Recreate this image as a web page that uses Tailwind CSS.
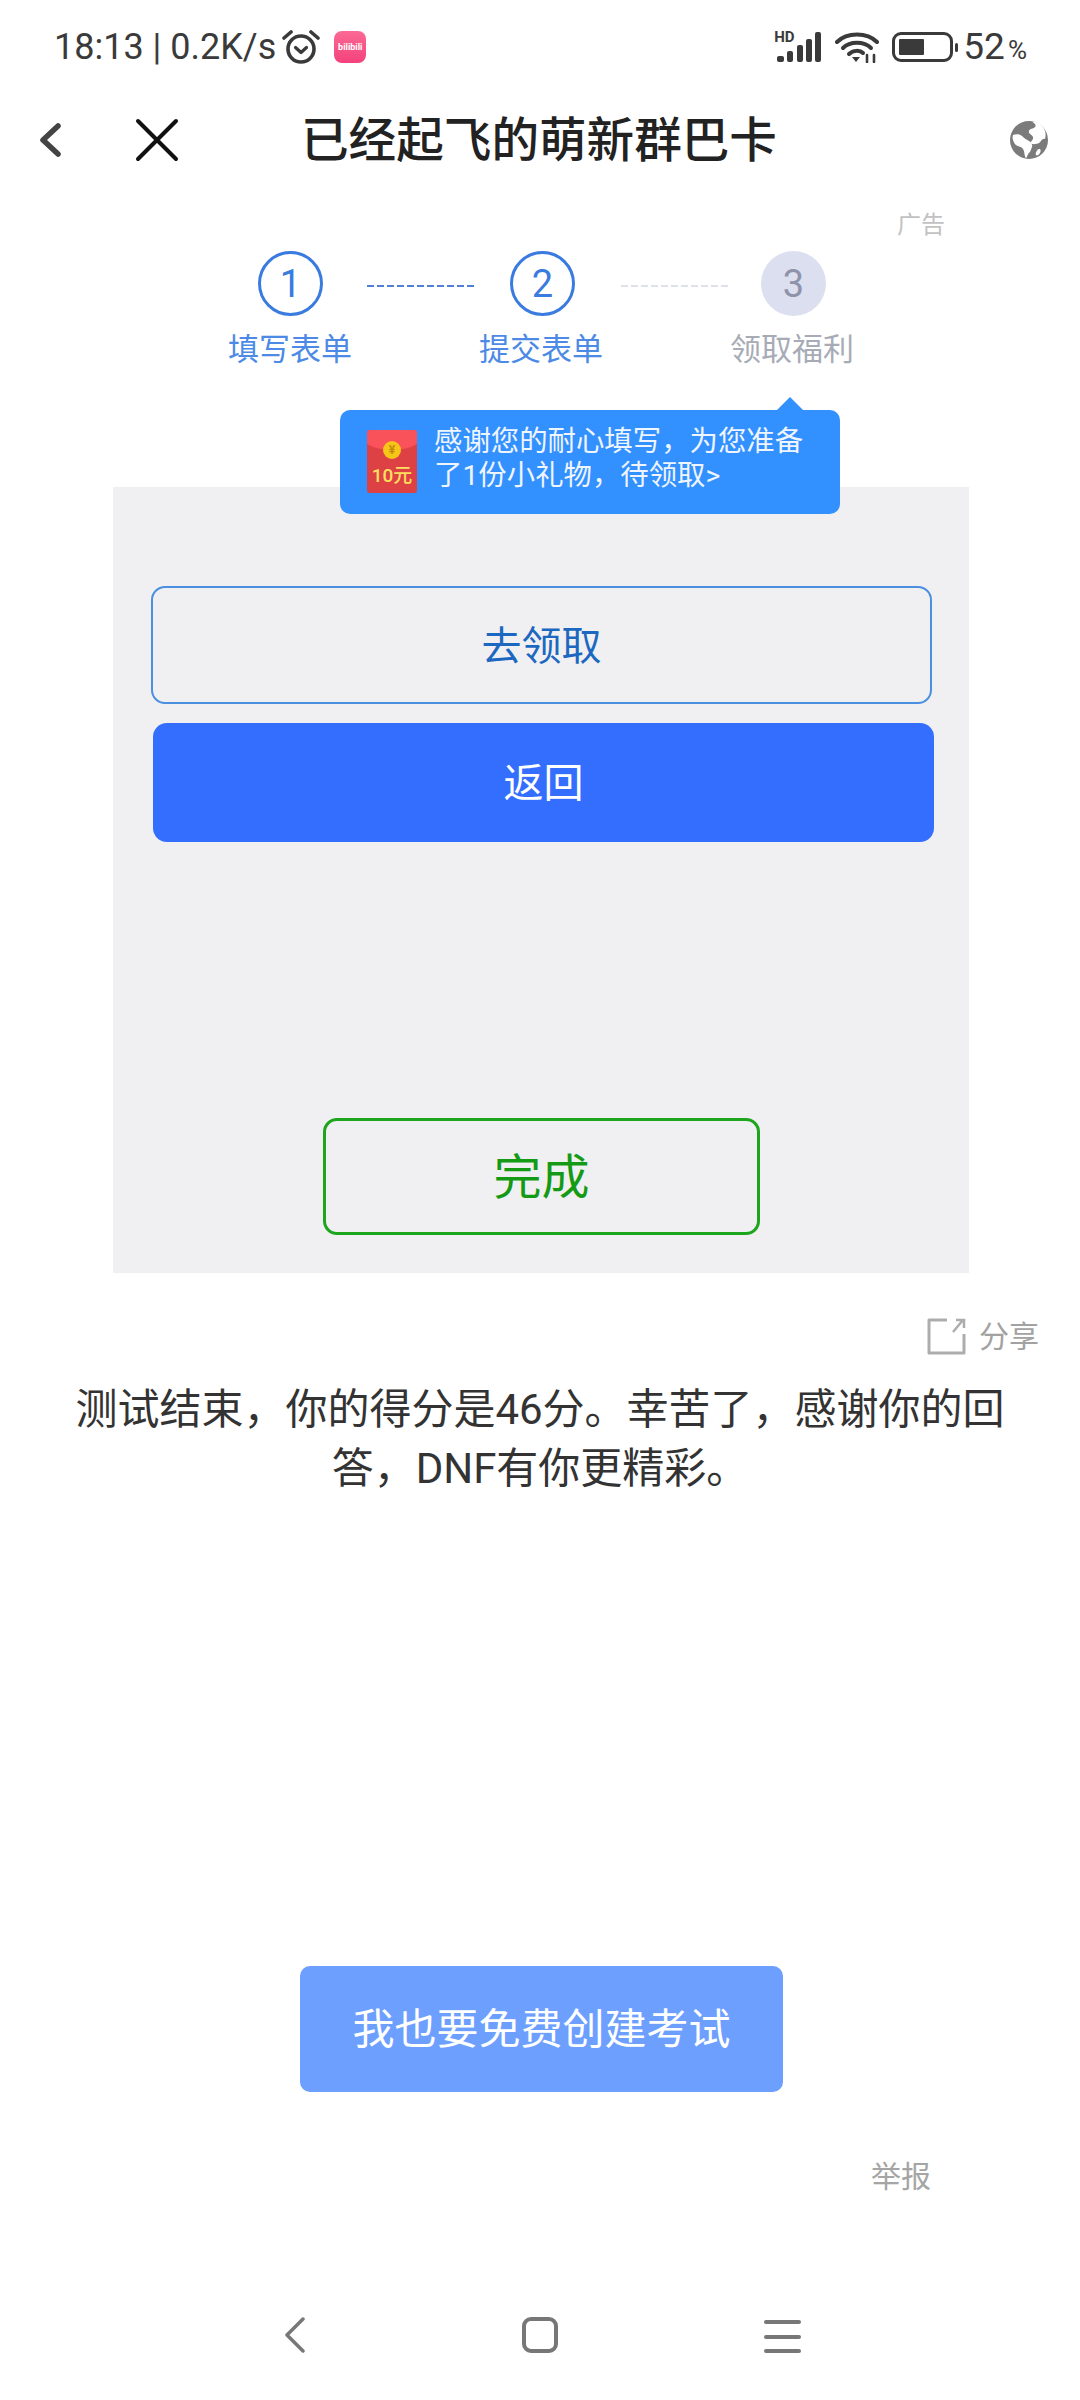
<!DOCTYPE html>
<html lang="zh-CN">
<head>
<meta charset="utf-8">
<script src="https://cdn.jsdelivr.net/npm/@tailwindcss/browser@4"></script>
</head>
<body>
<div class="relative w-[1080px] h-[2400px] bg-white overflow-hidden flex flex-col font-['Roboto','Noto_Sans_CJK_SC',sans-serif]">
  <!-- status bar -->
  <div class="h-[92px] flex items-center text-[#3a3a3a] pt-[2px]">
    <span class="ml-[54px] text-[36px] leading-[40px] whitespace-nowrap">18:13 | 0.2K/s</span>
    <svg class="ml-[6px] w-[38px] h-[36px]" viewBox="0 0 38 36" fill="none" stroke="#3a3a3a"><circle cx="19" cy="20" r="13" stroke-width="3.6"/><path d="M13.5 18.5l5.5 5 5.5-5" stroke-width="3.2" stroke-linecap="round" stroke-linejoin="round"/><path d="M2 9l7-6M36 9l-7-6" stroke-width="3.6" stroke-linecap="round"/></svg>
    <div class="ml-[14px] w-[32px] h-[32px] rounded-[8px] bg-[linear-gradient(180deg,#fb6a94,#f4417c)] flex items-center justify-center text-white text-[9px] leading-none font-bold">bilibili</div>
    <div class="ml-[410px] relative w-[46px] h-[31px]">
      <span class="absolute left-[-2px] top-[0px] text-[15px] leading-[11px] font-bold text-[#3a3a3a]">HD</span>
      <svg class="absolute left-0 top-0 w-[46px] h-[31px]" viewBox="0 0 46 31" fill="#3a3a3a"><rect x="1" y="24" width="7" height="6" rx="2"/><rect x="11" y="19" width="6" height="11" rx="2"/><rect x="21" y="13" width="6" height="17" rx="2"/><rect x="30" y="7" width="6" height="23" rx="2"/><rect x="39" y="0" width="6" height="30" rx="2"/></svg>
    </div>
    <svg class="ml-[13px] w-[44px] h-[32px]" viewBox="0 0 44 32" fill="none" stroke="#3a3a3a" stroke-linecap="round"><path d="M2 11C12 1 32 1 42 11" stroke-width="4"/><path d="M8 17C15 10 29 10 36 17" stroke-width="4"/><path d="M14 23C18 19 25 19 28 22" stroke-width="4"/><path d="M17 26h8l-4 5z" fill="#3a3a3a" stroke="none"/><path d="M32 24v7M39 24v7" stroke-width="2.6"/></svg>
    <div class="ml-[13px] w-[61px] h-[30px] rounded-[9px] border-[3px] border-[#3a3a3a] p-[4px]">
      <div class="w-[25px] h-full bg-[#3a3a3a] rounded-[1px]"></div>
    </div>
    <div class="ml-[2px] w-[3px] h-[9px] rounded-full bg-[#3a3a3a]"></div>
    <span class="ml-[5px] text-[37px] leading-[40px]">52</span>
    <span class="ml-[3px] mt-[6px] text-[26px] leading-[26px]">%</span>
  </div>

  <!-- title bar -->
  <div class="h-[96px] flex items-center">
    <svg class="ml-[38px] w-[24px] h-[36px]" viewBox="0 0 24 36" fill="none" stroke="#444" stroke-width="5.5" stroke-linecap="round" stroke-linejoin="round"><path d="M20 4L5 18l15 14"/></svg>
    <svg class="ml-[73px] w-[44px] h-[44px]" viewBox="0 0 44 44" fill="none" stroke="#111" stroke-width="4" stroke-linecap="round"><path d="M3 3l38 38M41 3L3 41"/></svg>
    <h1 class="ml-[122px] w-[483px] pt-[2px] text-[47.6px] leading-[60px] font-medium text-[#222] whitespace-nowrap">已经起飞的萌新群巴卡</h1>
    <svg class="ml-[225px] w-[40px] h-[40px]" viewBox="0 0 40 40"><circle cx="20" cy="20" r="19" fill="#7b7b7b"/><path d="M23 1.5c2 2 5 3 3 5.5s-5 1-6 4 3 3 4 6-3 4-2 6 6 1 8 0 3-5 6-4c1-3 1-8-2-12S28 2 23 1.5zM4 15c3-1 7-1 9 1s5 4 7 5 4 4 3 6-1 4-3 6-2 5-3 5c-2-2-1-6-3-9s-6-2-8-5-3-6-2-9zM30 29c2 0 2 2 1 4s-3 3-4 2 1-6 3-6z" fill="#fff"/></svg>
  </div>

  <!-- ad label -->
  <div class="h-[63px] pl-[897px] pt-[19px] text-[24px] leading-[36px] text-[#c2c2c2]">广告</div>

  <!-- steps -->
  <div class="flex items-center pl-[258px] h-[65px]">
    <div class="w-[65px] h-[65px] rounded-full border-[3px] border-[#3a7be0] flex items-center justify-center text-[38px] text-[#3a7be0] leading-none">1</div>
    <div class="ml-[44px] mt-[4px] w-[108px] h-[2px] bg-[repeating-linear-gradient(90deg,#4f80d6_0_7px,transparent_7px_10px)]"></div>
    <div class="ml-[35px] w-[65px] h-[65px] rounded-full border-[3px] border-[#3a7be0] flex items-center justify-center text-[38px] text-[#3a7be0] leading-none">2</div>
    <div class="ml-[46px] mt-[4px] w-[108px] h-[2px] bg-[repeating-linear-gradient(90deg,#dfe1e8_0_7px,transparent_7px_10px)]"></div>
    <div class="ml-[32px] w-[65px] h-[65px] rounded-full bg-[#dcdfef] flex items-center justify-center text-[38px] text-[#8e93ab] leading-none">3</div>
  </div>
  <div class="flex pl-[210px] h-[171px] pt-[16px] text-[31px] leading-[36px] text-center">
    <span class="w-[160px] text-[#4c8ae6]">填写表单</span>
    <span class="ml-[91px] w-[160px] text-[#4c8ae6]">提交表单</span>
    <span class="ml-[91px] w-[160px] text-[#a7abb6]">领取福利</span>
  </div>

  <!-- form panel -->
  <div class="ml-[113px] w-[856px] h-[786px] bg-[#f0f0f2] flex flex-col pt-[99px]">
    <div class="ml-[38px] w-[781px] h-[118px] rounded-[14px] border-2 border-[#4a8fe0] pt-[3px] flex items-center justify-center text-[40px] text-[#1c68c0]">去领取</div>
    <div class="ml-[40px] mt-[19px] w-[781px] h-[119px] rounded-[14px] bg-[#336eff] pt-[3px] flex items-center justify-center text-[40px] text-white">返回</div>
    <div class="ml-[210px] mt-[276px] w-[437px] h-[117px] rounded-[14px] border-[3px] border-[#1ea51e] pt-[3px] flex items-center justify-center text-[48px] text-[#159a15]">完成</div>
  </div>

  <!-- share -->
  <div class="mt-[45px] flex items-center justify-end pr-[41px] h-[37px]">
    <svg class="w-[39px] h-[37px]" viewBox="0 0 39 37" fill="none" stroke="#adadad" stroke-width="3"><path d="M20 2H2v33h35V16" stroke-linejoin="round"/><path d="M26 14L36 2M29 2h8v8" stroke-width="2.5"/></svg>
    <span class="ml-[13px] text-[30px] leading-[36px] text-[#a2a2a2]">分享</span>
  </div>

  <!-- result text -->
  <p class="mt-[25px] mx-auto w-[940px] text-center text-[42px] leading-[59px] text-[#333]">测试结束，你的得分是46分。幸苦了，感谢你的回答，DNF有你更精彩。</p>

  <!-- cta -->
  <div class="mt-[468px] ml-[300px] w-[483px] h-[126px] rounded-[10px] bg-[#6d9fff] flex items-center justify-center text-[42px] text-white">我也要免费创建考试</div>
  <div class="mt-[65px] pr-[149px] text-right text-[30px] leading-[40px] text-[#a5a5a5]">举报</div>

  <!-- nav bar -->
  <div class="mt-[120px] flex items-start pl-[285px]">
    <svg class="w-[20px] h-[36px]" viewBox="0 0 20 36" fill="none" stroke="#777" stroke-width="3.5" stroke-linecap="round" stroke-linejoin="round"><path d="M18 2L2 18l16 16"/></svg>
    <div class="ml-[217px] w-[36px] h-[36px] rounded-[9px] border-[4px] border-[#777]"></div>
    <div class="ml-[206px] w-[37px] h-[33px] mt-[3px] flex flex-col justify-between">
      <div class="h-[4px] rounded-full bg-[#777]"></div>
      <div class="h-[4px] rounded-full bg-[#777]"></div>
      <div class="h-[4px] rounded-full bg-[#777]"></div>
    </div>
  </div>

  <!-- tooltip overlay -->
  <div class="absolute left-[340px] top-[410px] w-[500px] h-[104px] rounded-[10px] bg-[#3390ff] flex items-center pl-[27px]">
    <svg class="absolute left-[436px] top-[-13px] w-[28px] h-[14px]" viewBox="0 0 28 14"><path d="M0 14L14 0l14 14z" fill="#3390ff"/></svg>
    <div class="relative w-[50px] h-[63px] mt-[-2px] rounded-[3px] bg-[#dd4144] overflow-hidden shrink-0">
      <div class="absolute left-[-10px] top-[-20px] w-[70px] h-[40px] rounded-b-[50%] bg-[#f9525a]"></div>
      <div class="absolute left-[16px] top-[11px] w-[18px] h-[18px] rounded-full bg-[#f5c518] text-[#c58a10] text-[12px] leading-[18px] text-center font-bold">¥</div>
      <div class="absolute inset-x-0 top-[35px] text-center text-[19px] leading-[22px] font-medium text-[#ffdf5e]">10元</div>
    </div>
    <p class="ml-[17px] w-[385px] text-[28.4px] leading-[34px] text-[#eef5ff] mt-[-6px]">感谢您的耐心填写，为您准备了1份小礼物，待领取&gt;</p>
  </div>
</div>
</body>
</html>
